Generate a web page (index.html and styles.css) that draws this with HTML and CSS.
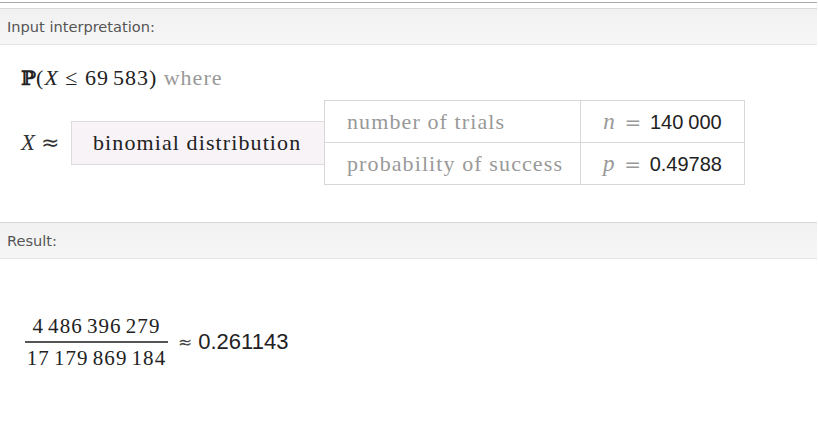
FILE: index.html
```html
<!DOCTYPE html>
<html>
<head>
<meta charset="utf-8">
<link rel="stylesheet" href="styles.css">
</head>
<body>
<div class="topline"></div>
<section class="pod">
  <div class="pod-header">Input interpretation:</div>
  <div class="pod-body input-body">
    <div class="prob-line"><span class="dbl">ℙ</span>(<i>X</i> ≤ 69<span class="thin"></span>583) <span class="gray">where</span></div>
    <div class="dist-row">
      <div class="xdist"><i>X</i><span class="distsym">≈</span></div>
      <div class="dist-box">binomial distribution</div>
      <table class="params">
        <tr><td class="pname">number of trials</td><td class="pval"><i class="gray">n</i> <span class="eq">=</span> <span class="num">140<span class="thin"></span>000</span></td></tr>
        <tr><td class="pname">probability of success</td><td class="pval"><i class="gray">p</i> <span class="eq">=</span> <span class="num">0.49788</span></td></tr>
      </table>
    </div>
  </div>
</section>
<section class="pod">
  <div class="pod-header">Result:</div>
  <div class="pod-body result-body">
    <div class="frac">
      <div class="numer">4<span class="thin"></span>486<span class="thin"></span>396<span class="thin"></span>279</div>
      <div class="bar"></div>
      <div class="denom">17<span class="thin"></span>179<span class="thin"></span>869<span class="thin"></span>184</div>
    </div>
    <div class="approx"><span class="apsym">≈</span><span class="num">0.261143</span></div>
  </div>
</section>
</body>
</html>
```
FILE: styles.css
```css
html, body {
  margin: 0;
  padding: 0;
  background: #ffffff;
}
body {
  width: 818px;
  height: 421px;
  overflow: hidden;
  font-family: "Liberation Serif", serif;
  color: #222;
}
.topline {
  height: 2px;
  border-bottom: 1px solid #a9a9a9;
  margin-right: 1px;
  margin-bottom: 5px;
}
.pod-header {
  height: 35px;
  line-height: 36px;
  margin-right: 1px;
  padding-left: 7px;
  border-top: 1px solid #d8d8d8;
  border-bottom: 1px solid #e4e4e4;
  background: linear-gradient(#f1f1f1, #f6f6f6);
  font-family: "DejaVu Sans", Verdana, sans-serif;
  font-size: 14.6px;
  color: #555;
}
.input-body {
  height: 177px;
  padding-left: 21px;
  padding-top: 21px;
  box-sizing: border-box;
}
.prob-line {
  font-size: 22px;
  line-height: 24px;
  letter-spacing: 1px;
  color: #222;
}
.dbl {
  font-family: "DejaVu Serif", serif;
  font-weight: bold;
  font-size: 20px;
  letter-spacing: 0;
}
.thin {
  display: inline-block;
  width: 4px;
}
.gray {
  color: #999;
}
.dist-row {
  display: flex;
  align-items: center;
  margin-top: 10px;
}
.xdist {
  width: 50px;
  font-size: 23px;
  color: #333;
}
.distsym {
  font-family: "DejaVu Sans", sans-serif;
  font-size: 22px;
  margin-left: 6px;
}
.dist-box {
  width: 253px;
  height: 44px;
  box-sizing: border-box;
  border: 1px solid #dcdcdc;
  border-right: none;
  background: #f7f3f7;
  padding-left: 21px;
  font-size: 22px;
  letter-spacing: 1.1px;
  line-height: 41px;
  color: #222;
}
.params {
  border-collapse: collapse;
}
.params td {
  border: 1px solid #d8d8d8;
  height: 41px;
  padding: 0;
  font-size: 22px;
  letter-spacing: 1.1px;
}
.pname {
  width: 233px;
  padding-left: 22px !important;
  color: #999;
}
.pval {
  width: 163px;
  text-align: center;
  color: #222;
}
.pval i {
  font-size: 23px;
}
.eq {
  color: #999;
  font-family: "DejaVu Sans", sans-serif;
  font-size: 20px;
  letter-spacing: 0;
  margin: 0 2px;
}
.num {
  font-family: "Liberation Sans", Arial, sans-serif;
  font-size: 20px;
  letter-spacing: 0;
  color: #222;
}
.pval .thin {
  width: 5px;
}
.result-body {
  display: flex;
  align-items: center;
  padding-left: 25px;
  padding-top: 56px;
}
.frac {
  display: flex;
  flex-direction: column;
  align-items: center;
  width: 143px;
  font-size: 21px;
  letter-spacing: 1.1px;
  color: #222;
}
.numer {
  line-height: 22px;
}
.bar {
  width: 143px;
  height: 2px;
  background: #555;
  margin: 4px 0 4px;
}
.denom {
  line-height: 22px;
}
.approx {
  margin-left: 10px;
  display: flex;
  align-items: center;
}
.apsym {
  font-family: "DejaVu Sans", sans-serif;
  font-size: 17px;
  color: #444;
  margin-right: 6px;
}
.approx .num {
  font-size: 22px;
}
```
